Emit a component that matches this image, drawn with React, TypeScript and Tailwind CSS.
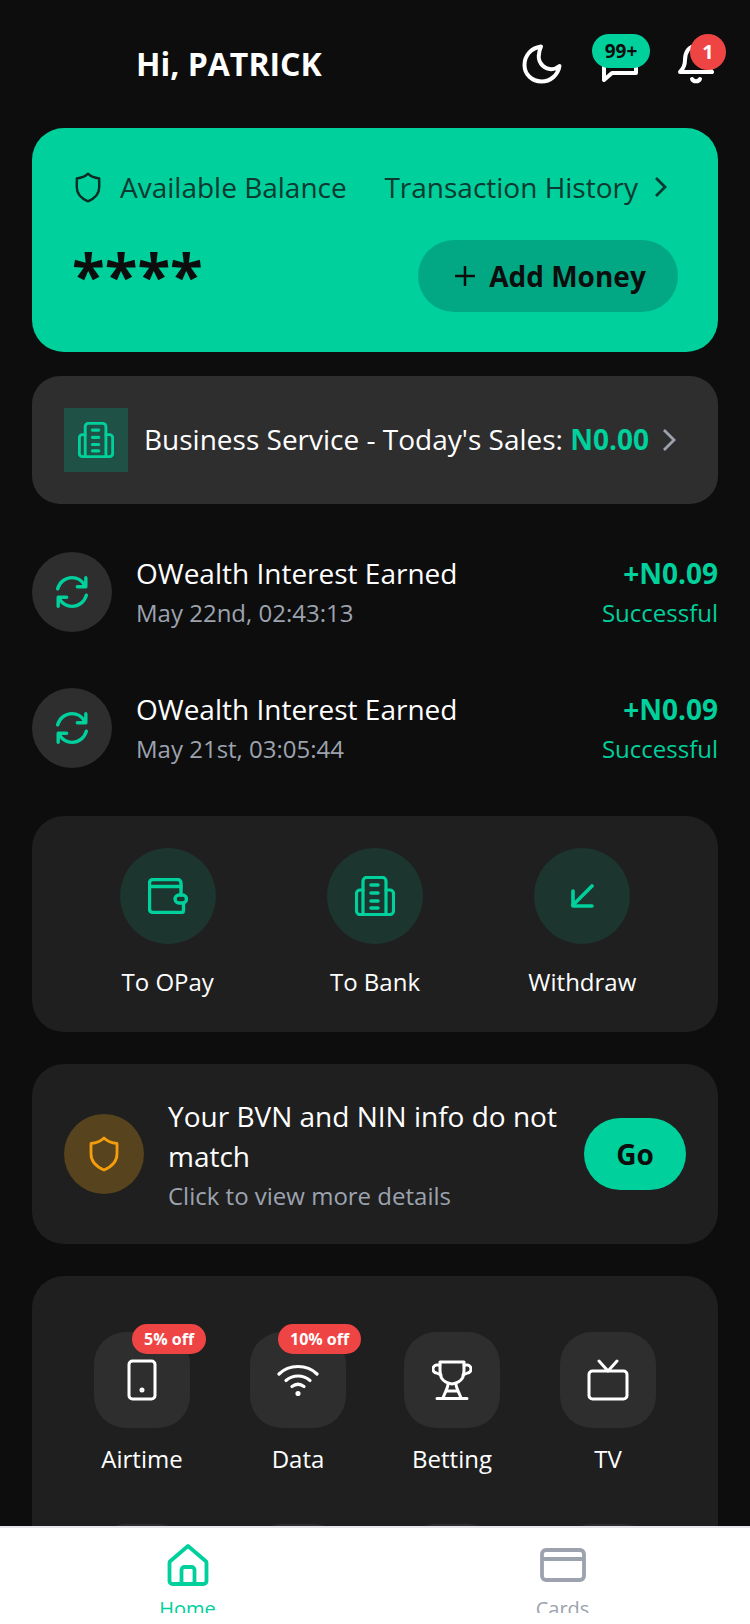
import React from "react";

const GREEN = "#00d09c";

function Bank({ size = 40, color = GREEN }: { size?: number; color?: string }) {
  return (
    <svg width={size} height={size} viewBox="0 0 40 40" fill="none" stroke={color} strokeWidth="3.200" strokeLinecap="round" strokeLinejoin="round">
      <path d="M8 38V5a3.500 3.500 0 0 1 3.500-3.500h16A3.500 3.500 0 0 1 31 5v33" />
      <path d="M8 14H5a3.500 3.500 0 0 0-3.500 3.500V35A3.500 3.500 0 0 0 5 38.500h30a3.500 3.500 0 0 0 3.500-3.500V17.500A3.500 3.500 0 0 0 35 14h-4" />
      <path d="M16 9h7M16 17h7M16 25h7M16 32h7" strokeWidth="3.600" />
    </svg>
  );
}

function Sync() {
  return (
    <svg width="34" height="34" viewBox="0 0 32 32" fill="none" stroke={GREEN} strokeWidth="3.200" strokeLinecap="round" strokeLinejoin="round">
      <path d="M2.500 13C4 7 9.500 2.500 16 2.500c5 0 9 2.500 11.500 6.500" />
      <path d="M29 2.500V11h-8" />
      <path d="M29.500 19C28 25 22.500 29.500 16 29.500c-5 0-9-2.500-11.500-6.500" />
      <path d="M3 29.500V21h8" />
    </svg>
  );
}

function Shield({ w, h, color, sw = 2.8 }: { w: number; h: number; color: string; sw?: number }) {
  return (
    <svg width={w} height={h} viewBox="0 0 32 36" fill="none" stroke={color} strokeWidth={sw} strokeLinejoin="round">
      <path d="M16 2c3 3 8 5 13 5.500V18c0 8-6 13-13 16C9 31 3 26 3 18V7.500C8 7 13 5 16 2z" />
    </svg>
  );
}

function Row({ date }: { date: string }) {
  return (
    <div className="flex items-center gap-[24px] h-[80px]">
      <div className="w-[80px] h-[80px] rounded-full bg-[#2e2e2e] flex items-center justify-center">
        <Sync />
      </div>
      <div className="flex-1 pt-[2px]">
        <div className="text-white text-[28px] leading-[40px]">OWealth Interest Earned</div>
        <div className="text-[#9ca3af] text-[24px] leading-[40px]">{date}</div>
      </div>
      <div className="text-right pt-[2px]">
        <div className="text-[#00d09c] text-[28px] leading-[40px] font-bold">+N0.09</div>
        <div className="text-[#00d09c] text-[24px] leading-[40px]">Successful</div>
      </div>
    </div>
  );
}

function Transfer({ label, icon }: { label: string; icon: React.ReactNode }) {
  return (
    <div className="flex flex-col items-center gap-[20px]">
      <div className="w-[96px] h-[96px] rounded-full bg-[#1c352e] flex items-center justify-center">{icon}</div>
      <div className="text-white text-[24px] leading-[36px] whitespace-nowrap">{label}</div>
    </div>
  );
}

function Service({ label, icon, badge, badgeLeft, cls = "" }: { label: string; icon: React.ReactNode; badge?: string; badgeLeft?: string; cls?: string }) {
  return (
    <div className={`relative w-[96px] flex flex-col items-center gap-[13px] ${cls}`}>
      <div className="w-[96px] h-[96px] rounded-[32px] bg-[#2e2e2e] flex items-center justify-center">{icon}</div>
      {badge && (
        <div className={`absolute ${badgeLeft} top-[-8px] h-[30px] px-[12px] rounded-full bg-[#ef4444] text-white text-[16px] font-bold leading-[30px] whitespace-nowrap`}>
          {badge}
        </div>
      )}
      <div className="text-white text-[24px] leading-[36px] whitespace-nowrap">{label}</div>
    </div>
  );
}

export default function App() {
  return (
    <div className="w-[750px] h-[1624px] bg-[#0d0d0d] flex flex-col overflow-hidden font-['Open_Sans','Noto_Sans',sans-serif]">
      <main className="h-[1526px] overflow-hidden px-[32px] shrink-0">
        <header className="h-[128px] flex items-center pl-[104px]">
          <div className="text-white text-[32px] font-bold">Hi, PATRICK</div>
          <div className="ml-auto flex items-center gap-[40px] mr-[4px]">
            <svg width="40" height="40" viewBox="0 0 40 40" fill="none" stroke="white" strokeWidth="4" strokeLinejoin="round" strokeLinecap="round">
              <path d="M19 2.500C9 4 2.500 11.500 2.500 21c0 9.500 7.500 16.500 17 16.500 9 0 16.500-6.500 18-15.500-3 2.500-6.500 3.500-10 3-7-1-12-8-10.500-15 .3-3 1-5.500 2-7.500z" />
            </svg>
            <div className="relative w-[36px] h-[36px]">
              <svg width="36" height="36" viewBox="0 0 36 36" fill="none" stroke="white" strokeWidth="4" strokeLinejoin="round" strokeLinecap="round">
                <path d="M2 34V4h32v23H10z" />
              </svg>
              <div className="absolute left-[-10px] top-[-12px] w-[58px] h-[34px] rounded-full bg-[#00d09c] text-[#0d0d0d] text-[19px] font-bold leading-[34px] text-center">99+</div>
            </div>
            <div className="relative w-[36px] h-[40px]">
              <svg width="36" height="40" viewBox="0 0 36 40" fill="none" stroke="white" strokeWidth="4" strokeLinejoin="round" strokeLinecap="round">
                <path d="M2 28c3-3 5-6 5-12C7 8 11 2 18 2s11 6 11 14c0 6 2 9 5 12z" />
                <path d="M14 35c1.500 3 6.500 3 8 0" />
              </svg>
              <div className="absolute left-[12px] top-[-10px] w-[36px] h-[36px] rounded-full bg-[#ef4444] text-white text-[20px] font-bold leading-[36px] text-center">1</div>
            </div>
          </div>
        </header>

        <section className="h-[224px] rounded-[32px] bg-[#00d09c] px-[40px] pt-[37px]">
          <div className="flex items-center h-[44px]">
            <div className="w-[30px] flex justify-end">
              <Shield w={28} h={31} color="#0d2a24" />
            </div>
            <span className="ml-[18px] text-[28px] text-[#0c3a30]">Available Balance</span>
            <span className="ml-auto text-[28px] text-[#0c3a30]">Transaction History</span>
            <svg className="ml-[15px] mr-[9px]" width="16" height="24" viewBox="0 0 16 24" fill="none" stroke="#0c3a30" strokeWidth="2.800">
              <path d="M3 3l9 9-9 9" />
            </svg>
          </div>
          <div className="flex items-start justify-between mt-[31px]">
            <div className="text-[#0d0d0d] text-[60px] font-bold leading-[60px] mt-[5px]">****</div>
            <div className="h-[72px] w-[260px] rounded-full bg-[#02a884] flex items-center justify-center gap-[12px] pl-[3px] pb-[1px]">
              <svg width="24" height="24" viewBox="0 0 24 24" fill="none" stroke="#0d0d0d" strokeWidth="2.500">
                <path d="M12 2v20M2 12h20" />
              </svg>
              <span className="text-[#0d0d0d] text-[28px] font-bold">Add Money</span>
            </div>
          </div>
        </section>

        <section className="mt-[24px] h-[128px] rounded-[28px] bg-[#2e2e2e] flex items-center px-[32px]">
          <div className="w-[64px] h-[64px] bg-[#1f5146] flex items-center justify-center">
            <Bank size={36} />
          </div>
          <div className="ml-[16px] text-[28px] leading-[38px] pb-[2px] text-white whitespace-nowrap">
            Business Service - Today's Sales: <span className="text-[#00d09c] font-bold">N0.00</span>
          </div>
          <svg className="ml-[12px]" width="16" height="26" viewBox="0 0 16 26" fill="none" stroke="#9ca3af" strokeWidth="2.800">
            <path d="M3 3l10 10-10 10" />
          </svg>
        </section>

        <div className="mt-[48px] flex flex-col gap-[56px]">
          <Row date="May 22nd, 02:43:13" />
          <Row date="May 21st, 03:05:44" />
        </div>

        <section className="mt-[48px] h-[216px] rounded-[32px] bg-[#1f1f1f] grid grid-cols-3 px-[32px] pt-[32px]">
          <Transfer
            label="To OPay"
            icon={
              <svg width="40" height="36" viewBox="0 0 40 36" fill="none" stroke={GREEN} strokeWidth="3.400" strokeLinejoin="round" strokeLinecap="round">
                <path d="M33 17V5a3.500 3.500 0 0 0-3.500-3.500H5A3.500 3.500 0 0 0 1.500 5v26A3.500 3.500 0 0 0 5 34.500h28.500a2 2 0 0 0 2-2V25" />
                <path d="M1.500 8.500H33" />
                <rect x="27" y="17" width="11.500" height="8" rx="4" />
              </svg>
            }
          />
          <Transfer label="To Bank" icon={<Bank />} />
          <Transfer
            label="Withdraw"
            icon={
              <svg width="26" height="24" viewBox="0 0 26 24" fill="none" stroke={GREEN} strokeWidth="3.600" strokeLinecap="round" strokeLinejoin="round">
                <path d="M23 2L4 21" />
                <path d="M4 7v15h19" />
              </svg>
            }
          />
        </section>

        <section className="mt-[32px] h-[180px] rounded-[32px] bg-[#1f1f1f] flex items-center px-[32px]">
          <div className="w-[80px] h-[80px] rounded-full bg-[#57431d] flex items-center justify-center shrink-0">
            <Shield w={32} h={36} color="#f59e0b" />
          </div>
          <div className="ml-[24px] flex-1 pt-[3px]">
            <div className="text-white text-[28px] leading-[40px]">Your BVN and NIN info do not match</div>
            <div className="text-[#9ca3af] text-[24px] leading-[40px]">Click to view more details</div>
          </div>
          <div className="w-[102px] h-[72px] rounded-full bg-[#00d09c] flex items-center justify-center text-[#0d0d0d] text-[28px] font-bold shrink-0">Go</div>
        </section>

        <section className="mt-[32px] h-[320px] rounded-[32px] bg-[#1f1f1f] px-[62px] pt-[56px]">
          <div className="flex gap-[60px]">
            <Service
              label="Airtime"
              badge="5% off"
              badgeLeft="left-[38px]"
              icon={
                <svg width="30" height="42" viewBox="0 0 30 42" fill="none" stroke="white" strokeWidth="3" strokeLinejoin="round">
                  <rect x="2" y="2" width="26" height="38" rx="3.500" />
                  <circle cx="15" cy="31" r="1" fill="white" />
                </svg>
              }
            />
            <Service
              label="Data"
              badge="10% off"
              badgeLeft="left-[28px]"
              icon={
                <svg width="42" height="32" viewBox="0 0 42 32" fill="none" stroke="white" strokeWidth="3.200" strokeLinecap="round">
                  <path d="M2 10C12 0 30 0 40 10" />
                  <path d="M9 16.500c7-6 17-6 24 0" />
                  <path d="M15 22.500c4-3 8-3 12 0" />
                  <circle cx="21" cy="29.500" r="1" fill="white" />
                </svg>
              }
            />
            <Service
              cls="ml-[-2px]"
              label="Betting"
              icon={
                <svg width="40" height="40" viewBox="0 0 40 40" fill="none" stroke="white" strokeWidth="3" strokeLinecap="round" strokeLinejoin="round">
                  <path d="M8 2h24v8c0 6-1 12-12 14C9 22 8 16 8 10z" />
                  <path d="M8 5H5.500a4 4 0 0 0-1 8l4.500 2M32 5h2.500a4 4 0 0 1 1 8L31 15" />
                  <path d="M16 24c0 4-3 8-5 14M24 24c0 4 3 8 5 14" />
                  <path d="M15 31h10M5 38.500h30" />
                </svg>
              }
            />
            <Service
              label="TV"
              icon={
                <svg width="42" height="42" viewBox="0 0 42 42" fill="none" stroke="white" strokeWidth="3" strokeLinecap="round" strokeLinejoin="round">
                  <rect x="2" y="12" width="38" height="28" rx="3.500" />
                  <path d="M12 2l9 10 9-10" />
                </svg>
              }
            />
          </div>
          <div className="mt-[47px] flex gap-[60px]">
            <div className="w-[96px] h-[96px] rounded-[32px] bg-[#2e2e2e]" />
            <div className="w-[96px] h-[96px] rounded-[32px] bg-[#2e2e2e]" />
            <div className="w-[96px] h-[96px] rounded-[32px] bg-[#2e2e2e] ml-[-2px]" />
            <div className="w-[96px] h-[96px] rounded-[32px] bg-[#2e2e2e]" />
          </div>
        </section>
      </main>

      <nav className="h-[98px] bg-white border-t-[2px] border-[#e5e7eb] flex shrink-0">
        <div className="w-[375px] h-[85px] overflow-hidden flex flex-col items-center pt-[16px]">
          <svg className="shrink-0" width="42" height="42" viewBox="0 0 42 42" fill="none" stroke={GREEN} strokeWidth="3.800" strokeLinejoin="round" strokeLinecap="round">
            <path d="M21 2L38 16.500a3 3 0 0 1 1.500 3V37a3 3 0 0 1-3 3H5.500a3 3 0 0 1-3-3V19.500a3 3 0 0 1 1.500-3z" />
            <path d="M14.500 40V26a3 3 0 0 1 3-3h7a3 3 0 0 1 3 3v14" />
          </svg>
          <div className="text-[#00d09c] text-[20px] leading-[28px] mt-[9px] shrink-0">Home</div>
        </div>
        <div className="w-[375px] h-[85px] overflow-hidden flex flex-col items-center pt-[16px]">
          <div className="h-[42px] flex items-center shrink-0">
            <svg width="46" height="34" viewBox="0 0 46 34" fill="none" stroke="#9ca3af" strokeWidth="3.800" strokeLinejoin="round">
              <rect x="2" y="2" width="42" height="30" rx="4" />
              <path d="M2 11h42" strokeWidth="4" />
            </svg>
          </div>
          <div className="text-[#9ca3af] text-[20px] leading-[28px] mt-[9px] shrink-0">Cards</div>
        </div>
      </nav>
    </div>
  );
}
